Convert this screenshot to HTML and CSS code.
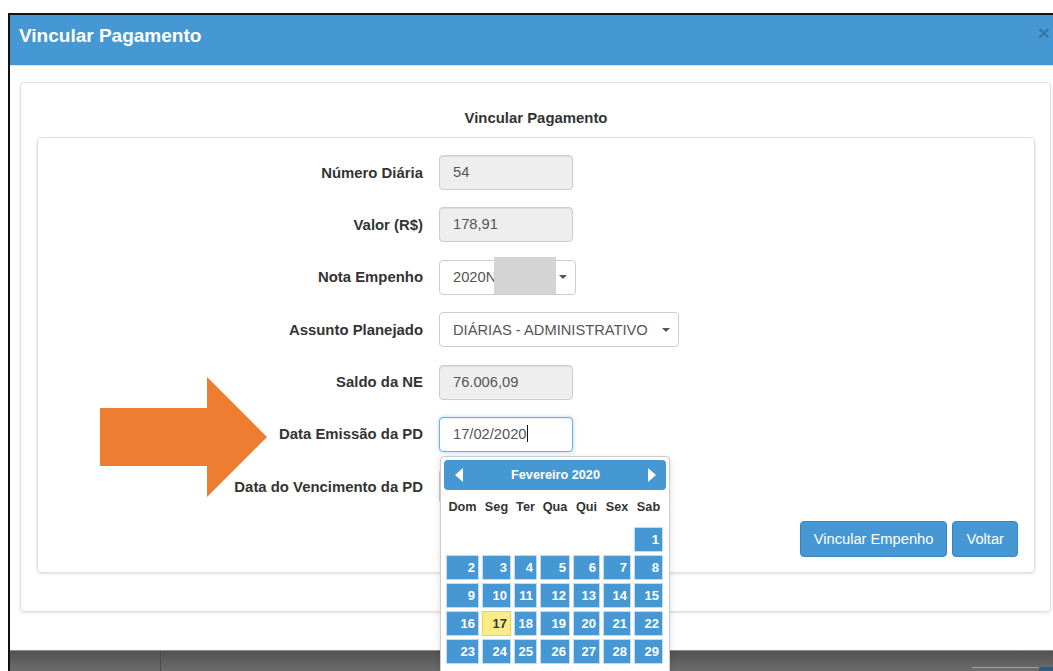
FILE: index.html
```html
<!DOCTYPE html>
<html lang="pt-BR">
<head>
<meta charset="utf-8">
<title>Vincular Pagamento</title>
<link rel="stylesheet" href="styles.css">
</head>
<body>
<div class="window">
  <div class="modal-header">
    <h1 class="modal-title">Vincular Pagamento</h1>
    <span class="close">&times;</span>
  </div>
  <div class="modal-body">
    <div class="panel">
      <div class="panel-title">Vincular Pagamento</div>
      <div class="form-box">
        <div class="form-grid">
          <label class="lbl">Número Diária</label>
          <div class="field"><div class="form-control readonly">54</div></div>

          <label class="lbl">Valor (R$)</label>
          <div class="field"><div class="form-control readonly">178,91</div></div>

          <label class="lbl">Nota Empenho</label>
          <div class="field">
            <div class="select select-nota"><span>2020N</span><span class="caret"></span><span class="redact"></span></div>
          </div>

          <label class="lbl">Assunto Planejado</label>
          <div class="field">
            <div class="select select-assunto"><span>DIÁRIAS - ADMINISTRATIVO</span><span class="caret"></span></div>
          </div>

          <label class="lbl">Saldo da NE</label>
          <div class="field"><div class="form-control readonly">76.006,09</div></div>

          <label class="lbl">Data Emissão da PD</label>
          <div class="field field-date">
            <div class="form-control focused">17/02/2020<span class="text-cursor"></span></div>
            <div class="datepicker">
              <div class="dp-header">
                <span class="dp-prev"></span>
                <span class="dp-title">Fevereiro 2020</span>
                <span class="dp-next"></span>
              </div>
              <div class="dp-grid">
                <div class="dp-dow">Dom</div><div class="dp-dow">Seg</div><div class="dp-dow">Ter</div><div class="dp-dow">Qua</div><div class="dp-dow">Qui</div><div class="dp-dow">Sex</div><div class="dp-dow">Sab</div>

                <div class="dp-empty"></div><div class="dp-empty"></div><div class="dp-empty"></div><div class="dp-empty"></div><div class="dp-empty"></div><div class="dp-empty"></div><div class="dp-day">1</div>
                <div class="dp-day">2</div><div class="dp-day">3</div><div class="dp-day">4</div><div class="dp-day">5</div><div class="dp-day">6</div><div class="dp-day">7</div><div class="dp-day">8</div>
                <div class="dp-day">9</div><div class="dp-day">10</div><div class="dp-day">11</div><div class="dp-day">12</div><div class="dp-day">13</div><div class="dp-day">14</div><div class="dp-day">15</div>
                <div class="dp-day">16</div><div class="dp-day dp-today">17</div><div class="dp-day">18</div><div class="dp-day">19</div><div class="dp-day">20</div><div class="dp-day">21</div><div class="dp-day">22</div>
                <div class="dp-day">23</div><div class="dp-day">24</div><div class="dp-day">25</div><div class="dp-day">26</div><div class="dp-day">27</div><div class="dp-day">28</div><div class="dp-day">29</div>
              </div>
            </div>
          </div>

          <label class="lbl">Data do Vencimento da PD</label>
          <div class="field"><div class="form-control"></div></div>
        </div>
        <div class="actions">
          <button class="btn">Vincular Empenho</button>
          <button class="btn">Voltar</button>
        </div>
      </div>
    </div>
  </div>
  <div class="taskbar">
    <div class="tb-divider"></div>
    <div class="tb-box"></div>
    <div class="tb-blue"></div>
  </div>
</div>

<svg class="pointer-arrow" width="170" height="124" viewBox="0 0 170 124">
  <polygon points="0,31 107,31 107,0 167,60 107,120 107,89 0,89" fill="#ed7d31"/>
</svg>
</body>
</html>
```

FILE: styles.css
```css
html, body {
  margin: 0;
  height: 671px;
  overflow: hidden;
  background: #fff;
}

body {
  font-family: "Liberation Sans", Arial, Helvetica, sans-serif;
  color: #333;
  position: relative;
}

/* Window frame */
.window {
  margin: 13px 0 0 8px;
  width: 1049px;
  border-top: 2px solid #111;
  border-left: 2px solid #111;
  background: #fff;
}

.modal-header {
  height: 51px;
  box-sizing: border-box;
  background: #4598d4;
  border-bottom: 1px solid #e5e5e5;
  display: flex;
  justify-content: space-between;
  align-items: flex-start;
  padding: 10px 9px 0 9px;
}

.modal-title {
  margin: 0;
  font-size: 19px;
  line-height: 22px;
  font-weight: bold;
  color: #fff;
}

.close {
  font-size: 21px;
  font-weight: bold;
  line-height: 22px;
  color: rgba(0, 0, 0, 0.22);
  margin-top: -3px;
}

.modal-body {
  padding: 16px 8px 38px 10px;
}

/* Outer panel */
.panel {
  border: 1px solid #e1e1e1;
  border-radius: 4px;
  box-shadow: 0 1px 3px rgba(0, 0, 0, 0.12);
  padding: 25px 15px 38px 16px;
}

.panel-title {
  text-align: center;
  font-weight: bold;
  font-size: 14.9px;
  line-height: 20px;
  margin-bottom: 9px;
}

/* Inner form box */
.form-box {
  border: 1px solid #e1e1e1;
  border-radius: 4px;
  box-shadow: 0 1px 3px rgba(0, 0, 0, 0.12);
  padding: 17px 16px 15px 0;
}

.form-grid {
  display: grid;
  grid-template-columns: 385px auto;
  column-gap: 16px;
  row-gap: 17.4px;
  align-items: center;
}

.lbl {
  text-align: right;
  font-weight: bold;
  font-size: 14.9px;
  color: #333;
}

.field {
  position: relative;
  height: 35px;
}

.form-control {
  box-sizing: border-box;
  width: 134px;
  height: 35px;
  border: 1px solid #ccc;
  border-radius: 4px;
  padding: 0 13px;
  font-size: 14.7px;
  line-height: 33px;
  color: #555;
  background: #fff;
  box-shadow: inset 0 1px 1px rgba(0, 0, 0, 0.075);
}

.form-control.readonly {
  background: #eee;
}

.form-control.focused {
  border-color: #66afe9;
  box-shadow: inset 0 1px 1px rgba(0, 0, 0, 0.075), 0 0 4px rgba(102, 175, 233, 0.5);
}

.text-cursor {
  display: inline-block;
  width: 0;
  height: 17px;
  border-left: 1px solid #111;
  vertical-align: -3px;
}

/* Dropdown buttons */
.select {
  position: relative;
  box-sizing: border-box;
  height: 35px;
  border: 1px solid #ccc;
  border-radius: 4px;
  background: #fff;
  display: flex;
  align-items: center;
  justify-content: space-between;
  padding: 0 8px 0 13px;
  font-size: 14.7px;
  color: #555;
}

.select-nota {
  width: 137px;
}

.select-assunto {
  width: 240px;
}

.caret {
  width: 0;
  height: 0;
  border-top: 4px solid #555;
  border-left: 4px solid transparent;
  border-right: 4px solid transparent;
}

.redact {
  position: absolute;
  left: 54px;
  top: -4px;
  width: 62px;
  height: 37px;
  background: #d4d4d4;
}

/* Datepicker popup */
.datepicker {
  position: absolute;
  z-index: 10;
  left: 1px;
  top: 39px;
  width: 230px;
  height: 230px;
  box-sizing: border-box;
  padding: 3px;
  background: #fff;
  border: 1px solid #ccc;
  border-radius: 4px;
  box-shadow: 0 2px 6px rgba(0, 0, 0, 0.15);
}

.dp-header {
  height: 30px;
  background: #4598d4;
  border-radius: 4px;
  display: flex;
  align-items: center;
  justify-content: space-between;
  padding: 0 10px 0 11px;
}

.dp-title {
  color: #fff;
  font-weight: bold;
  font-size: 12.7px;
}

.dp-prev {
  width: 0;
  height: 0;
  border-top: 7.5px solid transparent;
  border-bottom: 7.5px solid transparent;
  border-right: 8px solid #fff;
}

.dp-next {
  width: 0;
  height: 0;
  border-top: 7.5px solid transparent;
  border-bottom: 7.5px solid transparent;
  border-left: 8px solid #fff;
}

.dp-grid {
  display: grid;
  grid-template-columns: 33px 29px 23px 30px 27px 28px 29px;
  grid-template-rows: 34px;
  grid-auto-rows: 25px;
  column-gap: 3px;
  row-gap: 3px;
  padding: 0 2px;
}

.dp-dow {
  line-height: 34px;
  text-align: center;
  font-weight: bold;
  font-size: 12.7px;
  color: #333;
}

.dp-day {
  box-sizing: border-box;
  background: #4598d4;
  border: 1px solid #c5dbec;
  color: #fff;
  font-weight: bold;
  font-size: 13px;
  text-align: right;
  padding-right: 3px;
  line-height: 23px;
}

.dp-today {
  background: #fbec88;
  border-color: #fad42e;
  color: #363636;
}

/* Buttons */
.actions {
  display: flex;
  justify-content: flex-end;
  gap: 5px;
  margin-top: 17px;
}

.btn {
  height: 36px;
  padding: 0 13px;
  border: 1px solid #3a84c0;
  border-radius: 4px;
  background: #4598d4;
  color: #fff;
  font-family: "Liberation Sans", Arial, Helvetica, sans-serif;
  font-size: 14.7px;
}

/* Strip of the page below the dialog */
.taskbar {
  position: relative;
  height: 30px;
  border-top: 1px solid #8c8c8c;
  background: linear-gradient(#525252, #7a7a7a);
}

.tb-divider {
  position: absolute;
  left: 150px;
  top: 0;
  width: 1px;
  height: 30px;
  background: #4a4a4a;
}

.tb-box {
  position: absolute;
  left: 962px;
  top: 16px;
  width: 67px;
  height: 14px;
  border-top: 1px solid #a0a0a0;
  background: #6d6d6d;
}

.tb-blue {
  position: absolute;
  left: 1029px;
  top: 16px;
  width: 30px;
  height: 14px;
  background: #2b5d86;
}

/* Annotation arrow */
.pointer-arrow {
  position: absolute;
  left: 100px;
  top: 377px;
}
```
